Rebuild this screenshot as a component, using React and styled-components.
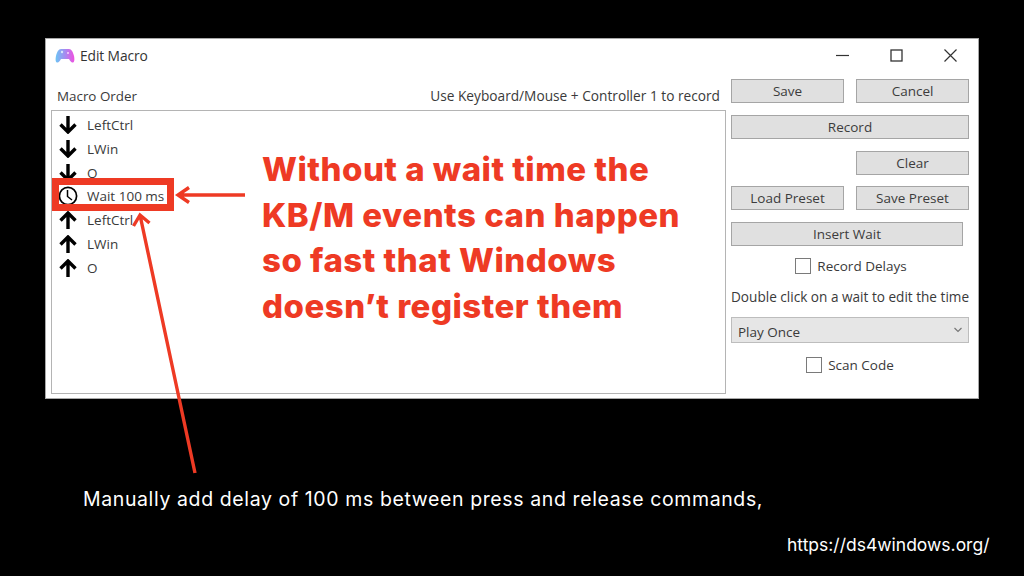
import React from 'react'
import styled, { createGlobalStyle } from 'styled-components'

const RED = '#ee3a24'

const Global = createGlobalStyle`
    html, body {
        margin: 0;
        padding: 0;
        background: #000;
    }
`

const Slide = styled.div`
    position: relative;
    width: 1024px;
    height: 576px;
    overflow: hidden;
    box-sizing: border-box;
    padding: 38px 45px 0;
    background: #000;
    font-family: "Open Sans", "Noto Sans", sans-serif;
`

const Win = styled.div`
    width: 934px;
    height: 361px;
    box-sizing: border-box;
    background: #fff;
    border: 1px solid #a8a8a8;
    display: flex;
    flex-direction: column;
    color: #3a3a3a;
    font-size: 13.5px;
`

const TitleBar = styled.div`
    display: flex;
    align-items: center;
    height: 34px;
    padding: 0 21px 0 9px;
    flex-shrink: 0;
`

const Title = styled.span`
    margin: -2px 0 0 5px;
    font-size: 13.8px;
    letter-spacing: -0.1px;
    color: #333;
`

const WinControls = styled.div`
    margin: -2px 0 0 auto;
    display: flex;
    align-items: center;
    gap: 41px;
`

const Body = styled.div`
    flex: 1;
    display: flex;
    padding: 6px 9px 4px 5px;
    gap: 5px;
`

const Left = styled.div`
    width: 675px;
    display: flex;
    flex-direction: column;
`

const LeftHead = styled.div`
    height: 31px;
    flex-shrink: 0;
    display: flex;
    justify-content: space-between;
    padding: 8px 6px 0;
    box-sizing: border-box;
    font-size: 13.4px;
    line-height: 18px;
`

const HeadNote = styled.span`
    font-size: 13.7px;
`

const MacroList = styled.ul`
    flex: 1;
    margin: 0;
    padding: 2px 0 0 0;
    list-style: none;
    border: 1px solid #b4b4b4;
`

const MacroRow = styled.li`
    display: flex;
    align-items: center;
    height: 23.85px;
    font-size: 13.5px;
`

const RowIcon = styled.span`
    width: 35px;
    box-sizing: border-box;
    display: flex;
    justify-content: center;
    padding-right: 3px;
    flex-shrink: 0;
`

const Side = styled.div`
    width: 238px;
    display: grid;
    grid-template-columns: 113px 113px;
    column-gap: 12px;
    grid-auto-rows: min-content;
    row-gap: 11.75px;
`

const Btn = styled.div`
    grid-column: ${p => p.$col || 'auto'};
    height: 24px;
    width: ${p => p.$width || 'auto'};
    box-sizing: border-box;
    background: #e0e0e0;
    border: 1.5px solid #a5a5a5;
    display: flex;
    align-items: center;
    justify-content: center;
    color: #3c3c3c;
    font-size: 13.5px;
`

const CheckRow = styled.div`
    grid-column: 1 / 3;
    display: flex;
    align-items: center;
    justify-content: center;
    gap: 6px;
    height: 18px;
    margin-top: ${p => p.$top || 0}px;
    transform: translateX(${p => p.$shift || 0}px);
`

const Box = styled.span`
    width: 16px;
    height: 16px;
    box-sizing: border-box;
    border: 1px solid #7a7a7a;
    background: #fff;
`

const Hint = styled.div`
    grid-column: 1 / 3;
    margin-top: 1px;
    height: 18px;
    line-height: 18px;
    white-space: nowrap;
    overflow: hidden;
    font-size: 13.6px;
`

const Combo = styled.div`
    grid-column: 1 / 3;
    height: 26px;
    box-sizing: border-box;
    background: #e6e6e6;
    border: 1px solid #bdbdbd;
    display: flex;
    align-items: center;
    justify-content: space-between;
    padding: 0 6px;
    font-size: 13.5px;
`

const ComboText = styled.span`
    padding-top: 3px;
`

const Caption = styled.p`
    margin: 88px 0 0 38px;
    color: #fff;
    font-family: "Inter", "Noto Sans", sans-serif;
    font-size: 19.5px;
    font-weight: 400;
    line-height: 24px;
    letter-spacing: 0.61px;
    white-space: nowrap;
`

const Link = styled.div`
    margin: 22px 0 0 742px;
    color: #fff;
    font-family: "Inter", "Noto Sans", sans-serif;
    font-size: 17.5px;
    font-weight: 400;
    line-height: 24px;
    white-space: nowrap;
`

const Callout = styled.h2`
    position: absolute;
    left: 262px;
    top: 147px;
    margin: 0;
    color: ${RED};
    font-family: "Inter", "Noto Sans", sans-serif;
    font-weight: 800;
    font-size: 33px;
    line-height: 45.5px;
    letter-spacing: 0.5px;
    white-space: nowrap;
`

const Highlight = styled.div`
    position: absolute;
    left: 52px;
    top: 178px;
    width: 122px;
    height: 33px;
    box-sizing: border-box;
    border: 7px solid ${RED};
`

const ArrowLayer = styled.svg`
    position: absolute;
    left: 0;
    top: 0;
    pointer-events: none;
`

const Pad = () => (
    <svg width="20" height="16" viewBox="0 0 20 16">
        <defs>
            <linearGradient id="pad" x1="0" x2="1" y1="0" y2="0">
                <stop offset="0" stopColor="#6cc4f4" />
                <stop offset="0.5" stopColor="#a48cf0" />
                <stop offset="1" stopColor="#f04ee0" />
            </linearGradient>
        </defs>
        <path d="M6 1h8c2.500 0 4 3 5 7 .6 3 .6 6-1 6.500-1.500.5-2.500-1-4-3.500H6c-1.500 2.500-2.500 4-4 3.500C.4 14 .4 11 1 8c1-4 2.500-7 5-7z" fill="url(#pad)" />
        <circle cx="7" cy="4" r="1.200" fill="#d8e6fa" />
        <circle cx="13" cy="5" r="1" fill="#f4d8fa" />
    </svg>
)

const Down = () => (
    <svg width="18" height="18" viewBox="0 0 18 18">
        <path d="M9 0v16M1.500 8.500L9 16l7.500-7.500" fill="none" stroke="#000" strokeWidth="3.400" />
    </svg>
)

const Up = () => (
    <svg width="18" height="18" viewBox="0 0 18 18">
        <path d="M9 18V2M1.500 9.500L9 2l7.500 7.500" fill="none" stroke="#000" strokeWidth="3.400" />
    </svg>
)

const Clock = () => (
    <svg width="20" height="20" viewBox="0 0 20 20">
        <circle cx="10" cy="10" r="8.600" fill="none" stroke="#000" strokeWidth="1.700" />
        <path d="M9.500 4V10.500L14 14" fill="none" stroke="#000" strokeWidth="1.500" />
    </svg>
)

const rows = [
    { id: 1, icon: <Down />, label: 'LeftCtrl' },
    { id: 2, icon: <Down />, label: 'LWin' },
    { id: 3, icon: <Down />, label: 'O' },
    { id: 4, icon: <Clock />, label: 'Wait 100 ms' },
    { id: 5, icon: <Up />, label: 'LeftCtrl' },
    { id: 6, icon: <Up />, label: 'LWin' },
    { id: 7, icon: <Up />, label: 'O' },
]

const App = () => {
    return (
        <Slide>
            <Global />
            <Win>
                <TitleBar>
                    <Pad />
                    <Title>Edit Macro</Title>
                    <WinControls>
                        <svg width="13" height="13" viewBox="0 0 13 13">
                            <path d="M0 6.500H13" stroke="#333" strokeWidth="1.200" />
                        </svg>
                        <svg width="13" height="13" viewBox="0 0 13 13">
                            <rect x="1" y="1" width="11" height="11" fill="none" stroke="#333" strokeWidth="1.300" />
                        </svg>
                        <svg width="13" height="13" viewBox="0 0 13 13">
                            <path d="M.5.5l12 12M12.500.5l-12 12" stroke="#333" strokeWidth="1.200" />
                        </svg>
                    </WinControls>
                </TitleBar>
                <Body>
                    <Left>
                        <LeftHead>
                            <span>Macro Order</span>
                            <HeadNote>Use Keyboard/Mouse + Controller 1 to record</HeadNote>
                        </LeftHead>
                        <MacroList>
                            {rows.map(row => (
                                <MacroRow key={row.id}>
                                    <RowIcon>{row.icon}</RowIcon>
                                    {row.label}
                                </MacroRow>
                            ))}
                        </MacroList>
                    </Left>
                    <Side>
                        <Btn>Save</Btn>
                        <Btn>Cancel</Btn>
                        <Btn $col="1 / 3">Record</Btn>
                        <Btn $col="2">Clear</Btn>
                        <Btn>Load Preset</Btn>
                        <Btn>Save Preset</Btn>
                        <Btn $col="1 / 3" $width="232px">Insert Wait</Btn>
                        <CheckRow $top={-1} $shift={1}><Box />Record Delays</CheckRow>
                        <Hint>Double click on a wait to edit the time</Hint>
                        <Combo>
                            <ComboText>Play Once</ComboText>
                            <svg width="8" height="6" viewBox="0 0 8 6">
                                <path d="M.5 1l3.500 3.500L7.500 1" fill="none" stroke="#777" strokeWidth="1.200" />
                            </svg>
                        </Combo>
                        <CheckRow $top={1}><Box />Scan Code</CheckRow>
                    </Side>
                </Body>
            </Win>
            <Caption>Manually add delay of 100 ms between press and release commands,</Caption>
            <Link>https://ds4windows.org/</Link>

            <Highlight />
            <Callout>
                Without a wait time the<br />
                KB/M events can happen<br />
                so fast that Windows<br />
                doesn’t register them
            </Callout>
            <ArrowLayer width="1024" height="576" viewBox="0 0 1024 576">
                <path d="M245 195H178M189 187.500l-11 7.500 11 7.500" fill="none" stroke={RED} strokeWidth="3.400" />
                <path d="M195 473L140 215M133.500 226l6.500-11 9.500 8" fill="none" stroke={RED} strokeWidth="3.400" />
            </ArrowLayer>
        </Slide>
    )
}

export default App
